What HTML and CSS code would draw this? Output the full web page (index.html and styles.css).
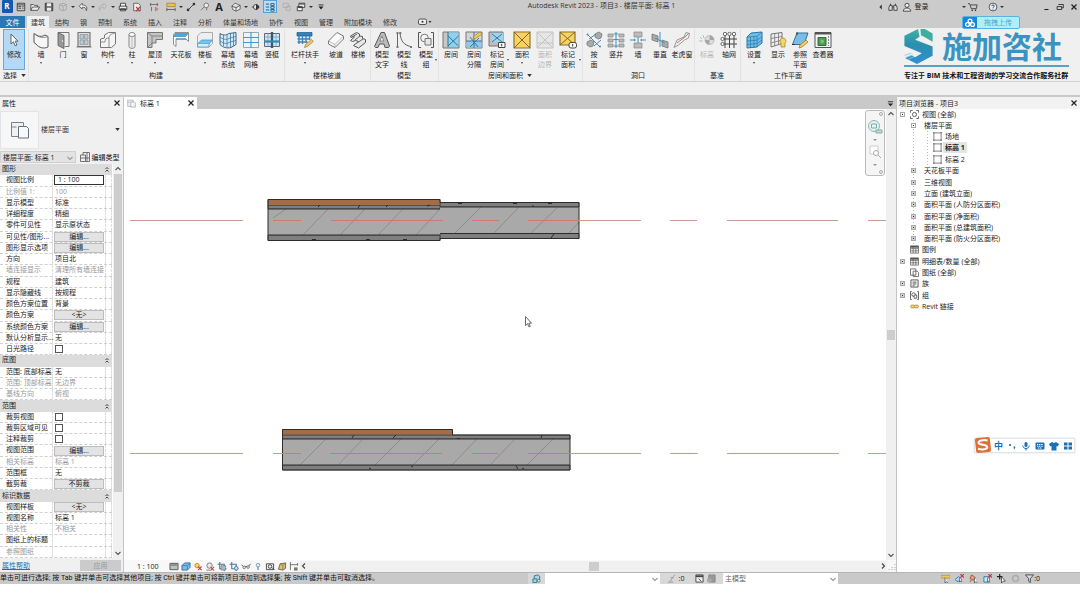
FILE: index.html
```html
<!DOCTYPE html>
<html lang="zh">
<head>
<meta charset="utf-8">
<title>Autodesk Revit 2023 - 项目3</title>
<link rel="stylesheet" href="styles.css">
</head>
<body>
<svg class="sprite" aria-hidden="true">
  <!-- ribbon icons -->
  <symbol id="cursor" viewBox="0 0 18 18"><path d="M6 3v10l2.400-2.200 1.800 4 1.800-.8-1.800-3.800H13z" fill="#fff" stroke="#555" stroke-width=".9"/></symbol>
  <symbol id="wall" viewBox="0 0 18 18"><path d="M2 2.500c4 3.500 8 3.500 11 1.500l3 1.500V16c-4 2-9 1-12-3l-2-1.500z" fill="#f6f6f6" stroke="#555"/><path d="M2 2.500 4.500 4c3 3 8 3 11.500 1.500" fill="none" stroke="#777" stroke-width=".8"/></symbol>
  <symbol id="door" viewBox="0 0 18 18"><path d="M4 1.500h11v14h-4" fill="#eee" stroke="#777"/><path d="M4 1.500l6 3v13l-6-3z" fill="#999" stroke="#555" stroke-width=".8"/><circle cx="8.500" cy="10" r=".7" fill="#fff"/></symbol>
  <symbol id="window" viewBox="0 0 18 18"><path d="M1.500 16h15M3 1.500h12v14H3z" fill="#ddd" stroke="#777" stroke-width="1.200"/><path d="M5 3.500h3.500v4.500H5zM9.500 3.500H13v4.500H9.500zM5 9h3.500v4.500H5zM9.500 9H13v4.500H9.500z" fill="#b9cad6" stroke="#888" stroke-width=".6"/></symbol>
  <symbol id="comp" viewBox="0 0 18 18"><path d="M1.500 8l4-1V4l4-2.500h7V13l-4 3.500h-11z" fill="#f4f4f4" stroke="#777"/><path d="M10 7c-3 0-4 1-4 4H1.500M10 7v9M10 7c0-3 2-4 6-5" fill="none" stroke="#777" stroke-width=".8"/></symbol>
  <symbol id="column" viewBox="0 0 18 18"><path d="M6 3.500v12c0 2.400 6 2.400 6 0v-12" fill="#eee" stroke="#888"/><ellipse cx="9" cy="3.500" rx="3" ry="2" fill="#fff" stroke="#888"/><path d="M9 6v10" stroke="#bbb"/></symbol>
  <symbol id="roof" viewBox="0 0 18 18"><path d="M1.500 1.500h15v7H10V12H6v4.500H1.500z" fill="#c4c4c4" stroke="#777"/><path d="M1.500 1.500l4.500 3.500h10.500M6 5v7l-4.500 4.500" fill="none" stroke="#777" stroke-width=".8"/></symbol>
  <symbol id="ceiling" viewBox="0 0 18 18"><path d="M3 1.500h13.500v9L14 8H4v7.500l-2.500-2V4z" fill="#fafafa" stroke="#777" stroke-width=".8"/><path d="M3.500 2.500H16L13.500 5.500H1.800z" fill="#45aae0" stroke="#2c7fae" stroke-width=".6"/><path d="M4 8h10" stroke="#2c8fc4"/></symbol>
  <symbol id="floor" viewBox="0 0 18 18"><path d="M5 1.500h11.500v11L13 16H1.500V5z" fill="#eee" stroke="#999" stroke-width=".8"/><path d="M1.500 13l4-4h11L13 13z" fill="#7cc3ea" stroke="#3d92c0" stroke-width=".7"/><path d="M1.500 13v3H13v-3" fill="#d7ecf7" stroke="#3d92c0" stroke-width=".7"/></symbol>
  <symbol id="cwsys" viewBox="0 0 18 18"><path d="M1 2.500c3 2 6 2 9 0l7-1v12l-5 3c-4 1-8 0-11-3z" fill="#d4e9f4" stroke="#44667c"/><path d="M1 6c4 3 7 3 10 1l6-1.500M1 10c4 3 7 3 10 1l6-1.500M4.500 3.500V15M8 3.500v13M11.500 2.500V17M14.500 2v13" fill="none" stroke="#3c7fa6" stroke-width=".8"/></symbol>
  <symbol id="cwgrid" viewBox="0 0 18 18"><path d="M1.500 1.500h15v15h-15z" fill="#eaf4fa" stroke="#9aa"/><path d="M9 1v16M1 6.500h16M1 11.500h16" stroke="#3a9ccf" stroke-width="1.100"/></symbol>
  <symbol id="mullion" viewBox="0 0 18 18"><path d="M1.500 2.500h15v13h-15z" fill="#cfe6f3" stroke="#667"/><path d="M5 2.500v13M13 2.500v13M1.500 6h15" stroke="#89a" stroke-width=".8"/><path d="M9 1v16" stroke="#37596d" stroke-width="2.400"/><path d="M1 10.500h16" stroke="#2f88ba" stroke-width="2.200"/></symbol>
  <symbol id="rail" viewBox="0 0 18 18"><path d="M1 1.500h15v3.500H1z" fill="#2d83c4" stroke="#24597d" stroke-width=".7"/><path d="M1.500 8h13M1.500 11h10M3 5v8M6.500 5v8M10 5v7M13.500 5v4" stroke="#3d87b8" stroke-width="1.400"/><path d="M8.500 16.500l1-3 6-5 1.800 2-6 5z" fill="#f3c765" stroke="#a77b29" stroke-width=".7"/></symbol>
  <symbol id="ramp" viewBox="0 0 18 18"><path d="M1.500 10l8.500-8.500 6.500 3.500v3L8 16.500 1.500 13z" fill="#fafafa" stroke="#777"/><path d="M1.500 10L8 13.500 16.500 5M8 13.500v3" fill="none" stroke="#999" stroke-width=".7"/></symbol>
  <symbol id="stair" viewBox="0 0 18 18"><path d="M1.500 5l6-3.500 3 1.500v2l3 .5v2l3 1v3l-7 5.500-5-2.500 5-4-3-1-3 1-2-1 4-3.500-1.500-.5-2 1z" fill="#e8e8e8" stroke="#555"/><path d="M3 6l5-3M6 9l5-4M8 12l6-4" stroke="#666"/></symbol>
  <symbol id="mtext" viewBox="0 0 18 18"><path d="M1.500 15.500L8 1.500h3.500l5 13.500-1 1.500h-3.500l-1-3.500H6.500L5 16.500H2.500z" fill="#bbb" stroke="#555"/><path d="M6.800 10L9 5l1.800 5z" fill="#f5f5f5" stroke="#666" stroke-width=".7"/></symbol>
  <symbol id="mline" viewBox="0 0 18 18"><path d="M2.500 2v14M5 2c1 9 4 12 12 14" fill="none" stroke="#555" stroke-width=".9"/><path d="M1.500 1h2v2h-2zM1.500 15h2v2h-2zM4.300 1h2v2h-2zM15 15h2v2h-2z" fill="#777"/></symbol>
  <symbol id="mgroup" viewBox="0 0 18 18"><path d="M4 1.500H1.500v15H4M14 1.500h2.500v15H14" fill="none" stroke="#555"/><circle cx="7.500" cy="7" r="3.800" fill="#f6f6f6" stroke="#777"/><path d="M8 7.500h6v6.500H8z" fill="#e6e6e6" stroke="#777"/></symbol>
  <symbol id="room" viewBox="0 0 18 18"><path d="M1 1h16v16H1z" fill="#c6c6c6" stroke="#777"/><path d="M6 1.500h10.500V16H6z" fill="#8fd0ef"/><path d="M6 5l10.500 10M16.500 5L6 15M6 1v15" stroke="#246b94" stroke-width=".9" fill="none"/></symbol>
  <symbol id="roomsep" viewBox="0 0 18 18"><path d="M1 1h16v16H1z" fill="#d4d4d4" stroke="#777"/><path d="M1.500 10h15v6.500h-15z" fill="#8fc9e8"/><path d="M5 6l8 10M14 7L5 16M1 10h16M9 1v16" stroke="#2b6f98" stroke-width=".9"/><path d="M8 8l1-3 6-4 2 2-6 4z" fill="#f1cf58" stroke="#927425" stroke-width=".6"/></symbol>
  <symbol id="roomtag" viewBox="0 0 18 18"><path d="M1 1h14v14H1z" fill="#bdbdbd" stroke="#777"/><path d="M4 2h11v9H4z" fill="#9fd3ee"/><path d="M4 3l10 8M14 3L4 11" stroke="#286e96" stroke-width=".9"/><path d="M10.500 11.500H17v5h-6.500z" fill="#fff" stroke="#444"/><path d="M13.700 12.800v2.500" stroke="#333"/></symbol>
  <symbol id="area" viewBox="0 0 18 18"><path d="M1 1h16v16H1z" fill="#f9d262" stroke="#8a7330" stroke-width="1.200"/><path d="M1 1l16 16M17 1L1 17" stroke="#6f5b23" stroke-width=".9"/></symbol>
  <symbol id="areab" viewBox="0 0 18 18"><path d="M1 1h16v16H1z" fill="#e6e6e6" stroke="#c2c2c2"/><path d="M1 1l16 16M17 1L1 17M1 12h16" stroke="#c4c4c4"/></symbol>
  <symbol id="areatag" viewBox="0 0 18 18"><path d="M1 1h15v13H1z" fill="#f9d262" stroke="#8a7330" stroke-width="1.200"/><path d="M1 1l15 13M16 1L1 14" stroke="#6f5b23" stroke-width=".9"/><rect x="10" y="11.500" width="7.500" height="5.500" rx="2" fill="#fff" stroke="#444"/><path d="M13.700 13v2.500" stroke="#333"/></symbol>
  <symbol id="byface" viewBox="0 0 18 18"><path d="M10 3l4-2 3 2-1 4-3 1-3-2zM2 11l4-2 3 2-1 4-3 1-3-2z" fill="#aaa" stroke="#777" stroke-width=".8"/><path d="M2 3l13 13M4 8l7-5M9 15l7-6" stroke="#4a8cb0"/><circle cx="2.500" cy="3.500" r="1" fill="#4a8cb0"/><circle cx="15" cy="15.500" r="1" fill="#4a8cb0"/></symbol>
  <symbol id="shaft" viewBox="0 0 18 18"><path d="M1 3h5v3H1zM12 3h5v3h-5zM1 8h5v3H1zM12 8h5v3h-5zM1 13h5v3H1zM12 13h5v3h-5z" fill="#bbb" stroke="#888" stroke-width=".7"/><path d="M9 1v16M6.500 3h5M6.500 8.500h5M6.500 15h5" stroke="#3e92bd"/></symbol>
  <symbol id="wallop" viewBox="0 0 18 18"><path d="M5 1h8v5H5zM5 12h8v5H5z" fill="#bbb" stroke="#888" stroke-width=".7"/><path d="M1 9h4M13 9h4M9 6v6" stroke="#3e92bd"/><path d="M5 7.500v3L7 9zM13 7.500v3L11 9z" fill="#3e92bd"/></symbol>
  <symbol id="vert" viewBox="0 0 18 18"><path d="M1 3l6 2v6L1 9zM11 9l6 2v6l-6-2z" fill="#aaa" stroke="#777" stroke-width=".8"/><path d="M9 1v15M4 7l10 5" stroke="#3e92bd"/></symbol>
  <symbol id="dormer" viewBox="0 0 18 18"><path d="M1 16.500L4 9l7-3 2-4.500 3.500 1-1 4.500-4 2-6 5z" fill="#f2f2f2" stroke="#999"/><path d="M4 12l8-6 4-4" fill="none" stroke="#a87d77"/></symbol>
  <symbol id="level" viewBox="0 0 18 18"><path d="M2 6l2 2M5 4l1 3M1 10h4" stroke="#bbb"/><circle cx="11.500" cy="9" r="4.500" fill="#ddd" stroke="#bbb"/><path d="M11.500 4.500V9H16a4.500 4.500 0 0 0-4.500-4.500M11.500 9v4.500A4.500 4.500 0 0 1 7 9z" fill="#a5a5a5"/></symbol>
  <symbol id="grid" viewBox="0 0 18 18"><path d="M5 5v12M9.500 5v12M14 5v12M4 8h13M4 13h13" stroke="#444"/><g fill="#fff" stroke="#444" stroke-width=".8"><circle cx="5" cy="3" r="1.700"/><circle cx="9.500" cy="3" r="1.700"/><circle cx="14" cy="3" r="1.700"/><circle cx="2.500" cy="8" r="1.600"/><circle cx="2.500" cy="13" r="1.600"/></g></symbol>
  <symbol id="wpset" viewBox="0 0 18 18"><path d="M2 6l4-4 11-1v11l-5 4-10 1z" fill="#6fbeea" stroke="#2b75a3"/><path d="M2 6l10-.7L17 1M12 5.500V16M5.500 6v11M9 5.500v11M2 10l10-.8 5-3.500M2 13.500l10-1 5-3.500" fill="none" stroke="#2b75a3" stroke-width=".7"/></symbol>
  <symbol id="wpshow" viewBox="0 0 18 18"><path d="M2 3l11-1.500v11L2 16z" fill="#eee" stroke="#777"/><path d="M5.700 2.500v12.500M9.500 2v12M2 7.500l11-2M2 12l11-3" stroke="#777" stroke-width=".8"/><path d="M14 7a3 3 0 0 0-2 5.200V16h4v-3.800A3 3 0 0 0 14 7z" fill="#f7d661" stroke="#9a8136" stroke-width=".7"/></symbol>
  <symbol id="refp" viewBox="0 0 18 18"><path d="M6 2h11l-4 11.500H1.500z" fill="#7dbce8" stroke="#356f99"/><path d="M6 1v3M1 13.500h3" stroke="#333"/><path d="M8 17l1-3 6-5 2 2-6 5z" fill="#f3cf62" stroke="#927425" stroke-width=".7"/></symbol>
  <symbol id="viewer" viewBox="0 0 18 18"><path d="M1 1.500h16v15H1z" fill="#f5f5f5" stroke="#555"/><path d="M1 2.500h16" stroke="#555" stroke-width="2"/><path d="M4 6.500h8v8H4z" fill="#4d9b51" stroke="#366f39"/><path d="M6.500 9c2-1 3.500 0 3.500 1.500s-1.500 2.500-3.500 1.500z" fill="#7dbf7b"/><path d="M14.500 5v10" stroke="#888" stroke-dasharray="2 1"/></symbol>
  <!-- quick access icons -->
  <symbol id="q-home" viewBox="0 0 12 12"><path d="M1.500 1.500h9v9h-9zM1.500 3.500h9M3 5.500h3M3 7.500h3M7.500 5.500H9M7.500 7.500H9" fill="none" stroke="#333"/></symbol>
  <symbol id="q-open" viewBox="0 0 12 12"><path d="M1 10V3h3l1 1h4v2M1 10l2-4h8.500L9 10z" fill="#eee" stroke="#444"/></symbol>
  <symbol id="q-save" viewBox="0 0 12 12"><path d="M1.500 1.500h9v9h-9z" fill="#666" stroke="#333"/><path d="M3.500 1.500h5V5h-5zM3.500 7h5v3.500h-5z" fill="#eee"/></symbol>
  <symbol id="q-cloud" viewBox="0 0 12 12"><path d="M2 3l4-1.500L10 3v6l-4 1.500L2 9zM2 3l4 2 4-2M6 5v5" fill="#ccc" stroke="#a2a2a2"/></symbol>
  <symbol id="q-undo" viewBox="0 0 12 12"><path d="M5 1.500L1.500 5 5 8.500V6.500c3-.5 5 .5 5 4 2-5-1-7-5-7z" fill="#eee" stroke="#444" stroke-width=".9"/></symbol>
  <symbol id="q-redo" viewBox="0 0 12 12"><path d="M7 1.500L10.500 5 7 8.500V6.500c-3-.5-5 .5-5 4-2-5 1-7 5-7z" fill="#ccc" stroke="#aaa" stroke-width=".9"/></symbol>
  <symbol id="q-print" viewBox="0 0 12 12"><path d="M3 5V1.500h6V5M1.500 5h9v4h-9zM3 8h6v2.500H3z" fill="#f0f0f0" stroke="#333"/></symbol>
  <symbol id="q-close" viewBox="0 0 12 12"><path d="M2 1.500h5.500L10 4v6.500H2z" fill="#eee" stroke="#555"/><path d="M5 6l4.500 5M9.500 6L5 11" stroke="#c33" stroke-width="1.400"/></symbol>
  <symbol id="q-measure" viewBox="0 0 12 12"><path d="M1 3h10M2 1v4M10 1v4M3 6v5M8 6v5" stroke="#666"/><path d="M8 7h3v3H8z" fill="#c88"/></symbol>
  <symbol id="q-dim" viewBox="0 0 12 12"><path d="M1 1.500h10v4H1z" fill="#f0c14f" stroke="#96762b" stroke-width=".8"/><path d="M1 9h10M1 7v4M11 7v4" stroke="#555"/></symbol>
  <symbol id="q-line" viewBox="0 0 12 12"><path d="M2 10l8-8" stroke="#333"/><circle cx="2.500" cy="9.500" r="1.600" fill="#333"/><circle cx="9.500" cy="2.500" r="1.600" fill="#333"/></symbol>
  <symbol id="q-tag" viewBox="0 0 12 12"><path d="M1 10l4-4M8 5v5" stroke="#666"/><circle cx="7.500" cy="4" r="2.800" fill="#eee" stroke="#666"/></symbol>
  <symbol id="q-3d" viewBox="0 0 12 12"><path d="M1 5l4-3.500L11 4v4.500L6 11 2 9zM1 5l5 2 5-3M6 7v4" fill="#eee" stroke="#444" stroke-width=".9"/></symbol>
  <symbol id="q-sect" viewBox="0 0 12 12"><path d="M1 6h3" stroke="#333"/><circle cx="6" cy="6" r="3" fill="#eee" stroke="#333"/><path d="M6 2l4.500 4L6 10z" fill="#333"/></symbol>
  <symbol id="q-thin" viewBox="0 0 12 12"><path d="M1 2.500h4M1 6h4M1 9.500h4M7 2h4v2H7zM7 5.500h4v2H7zM7 9h4v2H7z" fill="#fff" stroke="#24648f" stroke-width="1.200"/></symbol>
  <symbol id="q-hid" viewBox="0 0 12 12"><path d="M1.500 1.500h6v5h-6zM5 5h5v5H5z" fill="#ccc" stroke="#aaa"/></symbol>
  <symbol id="q-win" viewBox="0 0 12 12"><path d="M3.500 1.500h7v5h-7zM1.500 5.500h6v5h-6z" fill="#eee" stroke="#333"/><path d="M4 2.500h6M2 6.500h5" stroke="#333"/></symbol>
  <symbol id="dn" viewBox="0 0 6 4"><path d="M0 0h6L3 4z" fill="#333"/></symbol>
  <symbol id="chev" viewBox="0 0 8 8"><path d="M1.500 3L4 5.500 6.500 3" fill="none" stroke="currentColor" stroke-width="1.100"/></symbol>
  <symbol id="x" viewBox="0 0 8 8"><path d="M1.500 1.500l5 5M6.500 1.500l-5 5" stroke="#222" stroke-width="1.200"/></symbol>
  <symbol id="dbl" viewBox="0 0 8 8"><path d="M2.500 4L4 2.500 5.500 4M2.500 6.500L4 5l1.500 1.500" fill="none" stroke="#333" stroke-width=".9"/></symbol>
  <symbol id="plan" viewBox="0 0 20 20"><path d="M1.500 2.500h12v14h-12zM1.500 7h5" fill="#eef2f5" stroke="#78838d"/><path d="M8.500 6.500h8l2 2v9.500h-10z" fill="#f6f9fb" stroke="#66717b"/></symbol>
  <symbol id="sheet" viewBox="0 0 10 10"><path d="M1 1h8v8H1z" fill="#fff" stroke="#666" stroke-width=".9"/><path d="M0 1h1M0 9h1M9 1h1M9 9h1M1 0v1M9 0v1M1 9v1M9 9v1" stroke="#666"/></symbol>
  <symbol id="t-view" viewBox="0 0 10 10"><path d="M3 .5H.5V3M7 .5h2.500V3M3 9.500H.5V7M7 9.500h2.500V7" fill="none" stroke="#555"/><circle cx="5" cy="5" r="2.300" fill="none" stroke="#555"/></symbol>
  <symbol id="t-table" viewBox="0 0 10 10"><path d="M.5 1h9v8h-9zM.5 4h9M.5 6.500h9M3.500 1v8M6.500 4v5" fill="#fff" stroke="#555" stroke-width=".8"/><path d="M.5 2h9" stroke="#555" stroke-width="2"/></symbol>
  <symbol id="t-sheet" viewBox="0 0 10 10"><path d="M.5 1h6v7h-6zM3.500 3.500H8L9.500 5v4.500h-6z" fill="#fff" stroke="#555" stroke-width=".9"/></symbol>
  <symbol id="t-fam" viewBox="0 0 10 10"><path d="M1 1h8v8H1z" fill="#eee" stroke="#555"/><path d="M3 3.500h4M3 5.500h4M3 7.500h2" stroke="#555"/></symbol>
  <symbol id="t-grp" viewBox="0 0 10 10"><path d="M2 .5H.5v9H2M8 .5h1.500v9H8" fill="none" stroke="#555"/><circle cx="4" cy="4" r="2" fill="none" stroke="#555"/><path d="M4.500 4.500h3v3.500h-3z" fill="#fff" stroke="#555"/></symbol>
  <symbol id="t-link" viewBox="0 0 10 10"><rect x=".7" y="3.500" width="4.600" height="3" rx="1.500" fill="#f4d98c" stroke="#b88a1e"/><rect x="4.700" y="3.500" width="4.600" height="3" rx="1.500" fill="#f4d98c" stroke="#b88a1e"/></symbol>
  <!-- view bar and status icons -->
  <symbol id="v-detail" viewBox="0 0 10 10"><path d="M.5 1.500h9v7h-9z" fill="#b9c4bd" stroke="#555"/><path d="M1 3.500h8M3 2v2M5 2v2M7 2v2" stroke="#555" stroke-width=".6"/></symbol>
  <symbol id="v-style" viewBox="0 0 10 10"><path d="M.5 4l3-3h6v5l-3 3h-6z" fill="#7fb9e6" stroke="#2e6ea3"/><path d="M.5 4h6l3-3M6.500 4v5" fill="none" stroke="#2e6ea3" stroke-width=".7"/></symbol>
  <symbol id="v-sun" viewBox="0 0 10 10"><circle cx="4" cy="4" r="2.500" fill="#f7d063" stroke="#c3912a"/><path d="M5 5l4 4M9 5L5 9" stroke="#c04848" stroke-width="1.300"/></symbol>
  <symbol id="v-shadow" viewBox="0 0 10 10"><circle cx="4.500" cy="4" r="3" fill="#e8e8e8" stroke="#777"/><path d="M1 9h4" stroke="#777"/><path d="M5.500 5.500l4 4M9.500 5.500l-4 4" stroke="#c04848" stroke-width="1.200"/></symbol>
  <symbol id="v-crop" viewBox="0 0 10 10"><path d="M2.500 0v7.500H10M0 2.500h7.500V10" fill="none" stroke="#46799b" stroke-width="1.200"/><path d="M4 4h5v5H4z" fill="#a0bdd2" stroke="#8b5959" stroke-width=".6"/></symbol>
  <symbol id="v-cropshow" viewBox="0 0 10 10"><path d="M2.500 0v7.500H10M0 2.500h7.500V10" fill="none" stroke="#46799b" stroke-width="1.200"/><circle cx="7.500" cy="7" r="2" fill="#cfe3f0" stroke="#46799b"/></symbol>
  <symbol id="v-glass" viewBox="0 0 10 10"><path d="M0 3l3 3 2-1.500L7 6l3-4" fill="none" stroke="#555"/><circle cx="3" cy="6" r="1.500" fill="#ddd" stroke="#555" stroke-width=".7"/><circle cx="7.300" cy="5.600" r="1.500" fill="#ddd" stroke="#555" stroke-width=".7"/></symbol>
  <symbol id="v-bulb" viewBox="0 0 10 10"><circle cx="5" cy="3.500" r="2" fill="#e0f0fa" stroke="#568bac" stroke-width=".8"/><path d="M5 5.500v3.500" stroke="#568bac" stroke-width="1.300"/></symbol>
  <symbol id="v-temp" viewBox="0 0 10 10"><path d="M1 2h8v6.500H1z" fill="#eee" stroke="#444"/><circle cx="5" cy="5" r="2" fill="none" stroke="#444"/><path d="M7 6l3 3" stroke="#333"/></symbol>
  <symbol id="v-anal" viewBox="0 0 10 10"><path d="M1 8l2-6 6-1v6l-3 2z" fill="#d9c17c" stroke="#755f3c"/><path d="M3 2l3 2v5M6 4l3-3" fill="none" stroke="#755f3c" stroke-width=".7"/></symbol>
  <symbol id="v-cons" viewBox="0 0 10 10"><path d="M1 0v9M1 3h8M9 1v3" stroke="#666"/><path d="M5 6h4v3.500H5z" fill="#777"/></symbol>
  <symbol id="s-ws" viewBox="0 0 10 10"><path d="M1 5.500h4.500v4H1zM2.500 5.500V2l4-1 2 1.500v4" fill="#a7d4e6" stroke="#287992"/><circle cx="7.500" cy="7.500" r="1.500" fill="#eee" stroke="#444" stroke-width=".7"/></symbol>
  <symbol id="s-edit" viewBox="0 0 10 10"><path d="M3 9L7 3l2-2M1 9h6M4 4h3" fill="none" stroke="#999"/></symbol>
  <symbol id="s-opt" viewBox="0 0 10 10"><path d="M1 1h8v8H1z" fill="#eee" stroke="#444"/><path d="M1 2.500h8" stroke="#444" stroke-width="2"/><path d="M4 5l3 3" stroke="#444"/></symbol>
  <symbol id="s-opt2" viewBox="0 0 10 10"><path d="M2 1h7v8H2z" fill="#999" stroke="#888"/><path d="M0 5h5v4H0z" fill="#aaa"/></symbol>
  <symbol id="s-link" viewBox="0 0 10 10"><path d="M0 1.500h10v3H0z" fill="#ecc85e" stroke="#a88b34" stroke-width=".7"/><path d="M4.500 4v6l1.700-1.500L8 10" fill="#fff" stroke="#444" stroke-width=".8"/></symbol>
  <symbol id="s-und" viewBox="0 0 10 10"><path d="M0 6l4-3 3 2v3H2z" fill="#b8d8ef" stroke="#3c77a4"/><path d="M6 0l4 4M10 0L6 4" stroke="#c93535" stroke-width="1.200"/><path d="M5 4v5l1.500-1.500L8 9" fill="#fff" stroke="#444" stroke-width=".7"/></symbol>
  <symbol id="s-pin" viewBox="0 0 10 10"><path d="M3 1l4 3-2 3-4-2zM1 9l2-3" fill="#e8a082" stroke="#a65338"/><path d="M6 4v6l1.500-1.500L9.500 10" fill="#fff" stroke="#444" stroke-width=".8"/></symbol>
  <symbol id="s-face" viewBox="0 0 10 10"><path d="M1 3h6v6H1z" fill="#cfe5f3" stroke="#32779f"/><path d="M6 0l4 4M10 0L6 4" stroke="#c93535" stroke-width="1.200"/><path d="M5 4v5l1.500-1.500L8 9" fill="#fff" stroke="#444" stroke-width=".7"/></symbol>
  <symbol id="s-drag" viewBox="0 0 10 10"><path d="M3 0v6M0 3h6" stroke="#222" stroke-width="1.300"/><path d="M5 3v7l1.700-2h2.600z" fill="#fff" stroke="#333" stroke-width=".8"/></symbol>
  <symbol id="s-ring" viewBox="0 0 10 10"><circle cx="5" cy="5" r="3.300" fill="none" stroke="#aaa" stroke-width="1.500"/></symbol>
  <symbol id="s-filter" viewBox="0 0 10 10"><path d="M.5 1h9L6 5v4.500L4 8V5z" fill="#ddd" stroke="#444"/></symbol>
</svg>

<div class="app">
  <header class="titlebar">
    <nav class="qat" aria-label="快速访问工具栏">
      <button class="rlogo" aria-label="Revit"><b>R</b></button>
      <button aria-label="主页"><svg><use href="#q-home"/></svg></button>
      <button aria-label="打开"><svg><use href="#q-open"/></svg></button>
      <button aria-label="保存"><svg><use href="#q-save"/></svg></button>
      <button aria-label="同步"><svg><use href="#q-cloud"/></svg></button>
      <i class="caret"></i>
      <button aria-label="放弃"><svg><use href="#q-undo"/></svg></button>
      <i class="caret"></i>
      <button aria-label="重做"><svg><use href="#q-redo"/></svg></button>
      <i class="caret"></i>
      <button aria-label="打印"><svg><use href="#q-print"/></svg></button>
      <button aria-label="关闭文件"><svg><use href="#q-close"/></svg></button>
      <i class="sep"></i>
      <button aria-label="测量"><svg><use href="#q-measure"/></svg></button>
      <i class="sep"></i>
      <button aria-label="对齐尺寸标注"><svg><use href="#q-dim"/></svg></button>
      <i class="caret"></i>
      <button aria-label="直线"><svg><use href="#q-line"/></svg></button>
      <button aria-label="按类别标记"><svg><use href="#q-tag"/></svg></button>
      <button class="bigA" aria-label="文字">A</button>
      <i class="sep"></i>
      <button aria-label="三维视图"><svg><use href="#q-3d"/></svg></button>
      <i class="caret"></i>
      <button aria-label="剖面"><svg><use href="#q-sect"/></svg></button>
      <button class="on" aria-label="细线"><svg><use href="#q-thin"/></svg></button>
      <i class="sep"></i>
      <button aria-label="关闭非活动视图"><svg><use href="#q-hid"/></svg></button>
      <button aria-label="切换窗口"><svg><use href="#q-win"/></svg></button>
      <i class="caret"></i>
      <button aria-label="自定义"><svg viewBox="0 0 12 12"><path d="M3 3.500h6" stroke="#222"/><path d="M3 5.500h6L6 9z" fill="#222"/></svg></button>
    </nav>
    <h1>Autodesk Revit 2023 - 项目3 - 楼层平面: 标高 1</h1>
    <div class="account">
      <button aria-label="收起"><svg viewBox="0 0 12 12"><path d="M7 3v6L4 6z" fill="#333"/></svg></button>
      <button aria-label="搜索"><svg viewBox="0 0 12 12"><path d="M2 4h3v6H1V7zM7 4h3l1 3v3H7zM5 6h2M3 2v2M9 2v2" fill="#ddd" stroke="#333"/></svg></button>
      <button class="login"><svg viewBox="0 0 12 12"><circle cx="6" cy="4" r="2.500" fill="#eee" stroke="#333"/><path d="M1.500 11c0-5 9-5 9 0z" fill="#eee" stroke="#333"/></svg>登录</button>
      <i class="caret push"></i>
      <button aria-label="购物车"><svg viewBox="0 0 12 12"><path d="M0 2h2l2 6h6l1-4.500H3" fill="none" stroke="#333"/><circle cx="5" cy="10" r="1" fill="#333"/><circle cx="9" cy="10" r="1" fill="#333"/></svg></button>
      <button class="help" aria-label="帮助"><svg viewBox="0 0 12 12"><circle cx="6" cy="6" r="4.700" fill="#eee" stroke="#345"/><path d="M4.500 5c0-2 3-2 3 0 0 1-1.500 1-1.500 2M6 8v1" fill="none" stroke="#234"/></svg></button>
      <i class="caret"></i>
      <span class="wins">
        <button aria-label="最小化"><svg viewBox="0 0 12 12"><path d="M4 9h5" stroke="#222" stroke-width="1.300"/></svg></button>
        <button aria-label="还原"><svg viewBox="0 0 12 12"><path d="M4 3h6v4H8M2.500 5.500H8v3.500H2.500z" fill="none" stroke="#222"/></svg></button>
        <button aria-label="关闭"><svg viewBox="0 0 12 12"><path d="M3 3l6 6M9 3l-6 6" stroke="#222" stroke-width="1.500"/></svg></button>
      </span>
    </div>
  </header>

  <nav class="tabs">
    <button class="file">文件</button>
    <button class="active">建筑</button>
    <button>结构</button><button>钢</button><button>预制</button><button>系统</button><button>插入</button><button>注释</button><button>分析</button><button>体量和场地</button><button>协作</button><button>视图</button><button>管理</button><button>附加模块</button><button>修改</button>
    <button class="more" aria-label="显示"><svg viewBox="0 0 14 8"><rect x=".5" y="1" width="8" height="5.500" rx="1.500" fill="#eee" stroke="#555"/><circle cx="4.500" cy="3.700" r="1" fill="#333"/><path d="M10.500 3h3L12 5z" fill="#333"/></svg></button>
    <button class="upload"><svg viewBox="0 0 14 12"><path d="M0 0h14v12H0z" fill="#1787dc"/><g fill="none" stroke="#fff" stroke-width="1.300"><circle cx="7" cy="4" r="1.900"/><circle cx="4.500" cy="7.500" r="1.900"/><circle cx="9.500" cy="7.500" r="1.900"/></g></svg><span>拖拽上传</span></button>
  </nav>

  <section class="ribbon">
    <div class="panel sel">
      <div class="tools"><button class="tool w22 active"><svg><use href="#cursor"/></svg>修改</button></div>
      <p>选择<svg class="dn"><use href="#dn"/></svg></p>
    </div>
    <div class="panel">
      <div class="tools">
        <button class="tool w24 dd"><svg><use href="#wall"/></svg>墙</button>
        <button class="tool w20"><svg><use href="#door"/></svg>门</button>
        <button class="tool w22"><svg><use href="#window"/></svg>窗</button>
        <button class="tool w26 dd"><svg><use href="#comp"/></svg>构件</button>
        <button class="tool w22 dd"><svg><use href="#column"/></svg>柱</button>
        <button class="tool w24 dd"><svg><use href="#roof"/></svg>屋顶</button>
        <button class="tool w28"><svg><use href="#ceiling"/></svg>天花板</button>
        <button class="tool w20 dd"><svg><use href="#floor"/></svg>楼板</button>
        <button class="tool w26"><svg><use href="#cwsys"/></svg>幕墙<br>系统</button>
        <button class="tool w20"><svg><use href="#cwgrid"/></svg>幕墙<br>网格</button>
        <button class="tool w22"><svg><use href="#mullion"/></svg>竖梃</button>
      </div>
      <p>构建</p>
    </div>
    <div class="panel">
      <div class="tools">
        <button class="tool w40 dd"><svg><use href="#rail"/></svg>栏杆扶手</button>
        <button class="tool w22"><svg><use href="#ramp"/></svg>坡道</button>
        <button class="tool w22"><svg><use href="#stair"/></svg>楼梯</button>
      </div>
      <p>楼梯坡道</p>
    </div>
    <div class="panel">
      <div class="tools">
        <button class="tool w22"><svg><use href="#mtext"/></svg>模型<br>文字</button>
        <button class="tool w22"><svg><use href="#mline"/></svg>模型<br>线</button>
        <button class="tool w22 ds"><svg><use href="#mgroup"/></svg>模型<br>组</button>
      </div>
      <p>模型</p>
    </div>
    <div class="panel">
      <div class="tools">
        <button class="tool w24"><svg><use href="#room"/></svg>房间</button>
        <button class="tool w22"><svg><use href="#roomsep"/></svg>房间<br>分隔</button>
        <button class="tool w24 ds"><svg><use href="#roomtag"/></svg>标记<br>房间</button>
        <button class="tool w26 dd"><svg><use href="#area"/></svg>面积</button>
        <button class="tool w20 off" disabled><svg><use href="#areab"/></svg>面积<br>边界</button>
        <button class="tool w26 ds"><svg><use href="#areatag"/></svg>标记<br>面积</button>
      </div>
      <p>房间和面积<svg class="dn"><use href="#dn"/></svg></p>
    </div>
    <div class="panel">
      <div class="tools">
        <button class="tool w22"><svg><use href="#byface"/></svg>按<br>面</button>
        <button class="tool w22"><svg><use href="#shaft"/></svg>竖井</button>
        <button class="tool w22"><svg><use href="#wallop"/></svg>墙</button>
        <button class="tool w22"><svg><use href="#vert"/></svg>垂直</button>
        <button class="tool w22"><svg><use href="#dormer"/></svg>老虎窗</button>
      </div>
      <p>洞口</p>
    </div>
    <div class="panel">
      <div class="tools">
        <button class="tool w24 off" disabled><svg><use href="#level"/></svg>标高</button>
        <button class="tool w20"><svg><use href="#grid"/></svg>轴网</button>
      </div>
      <p>基准</p>
    </div>
    <div class="panel last">
      <div class="tools">
        <button class="tool w26 dd"><svg><use href="#wpset"/></svg>设置</button>
        <button class="tool w22"><svg><use href="#wpshow"/></svg>显示</button>
        <button class="tool w22"><svg><use href="#refp"/></svg>参照<br>平面</button>
        <button class="tool w24"><svg><use href="#viewer"/></svg>查看器</button>
      </div>
      <p>工作平面</p>
    </div>
    <aside class="brand">
      <div class="brandrow">
        <svg viewBox="0 0 30 36">
          <defs><linearGradient id="sg" x1="0" y1="0" x2="0" y2="1"><stop offset="0" stop-color="#3fb0a4"/><stop offset=".45" stop-color="#2a8fae"/><stop offset="1" stop-color="#2f8fd6"/></linearGradient></defs>
          <path d="M14 0L0 7v10.500L18 25l-7 4-4-2-6 3 12 6 16-8.500V18L11 11l4.500-3z" fill="url(#sg)"/>
          <path d="M16.500 0H21l8 4.500V13l-8-4.500-4-2z" fill="#3fae9f"/>
          <path d="M0 27l7-2M1 29.500l8-3M3 31.500l7-3" stroke="#8cc9dc" stroke-width=".9"/>
        </svg>
        <strong>施加咨社</strong>
      </div>
      <small>专注于 BIM 技术和工程咨询的学习交流合作服务社群</small>
    </aside>
  </section>
  <div class="options"></div>

  <main class="work">
    <aside class="props">
      <header class="phead"><h2>属性</h2><button aria-label="关闭属性"><svg><use href="#x"/></svg></button></header>
      <button class="ptype"><span class="thumb"><svg><use href="#plan"/></svg></span><span>楼层平面</span><svg class="dn"><use href="#dn"/></svg></button>
      <div class="pfilter">
        <span class="selwrap"><select aria-label="实例"><option>楼层平面: 标高 1</option></select><svg><use href="#chev"/></svg></span>
        <button><svg viewBox="0 0 10 10"><path d="M.5 3h5v6.500h-5zM3 3V.5h6.500v9h-4M.5 6h9M7 .5v9" fill="#eee" stroke="#555" stroke-width=".8"/></svg>编辑类型</button>
      </div>
      <div class="pbody">
        <table>
          <tbody>
            <tr class="grp"><th colspan="3">图形<svg><use href="#dbl"/></svg></th></tr>
            <tr><th><label for="scale">视图比例</label></th><td><input id="scale" type="text" value="1 : 100"></td><td></td></tr>
            <tr class="ro"><th>比例值 1:</th><td>100</td><td></td></tr>
            <tr><th>显示模型</th><td>标准</td><td></td></tr>
            <tr><th>详细程度</th><td>精细</td><td></td></tr>
            <tr><th>零件可见性</th><td>显示原状态</td><td></td></tr>
            <tr><th>可见性/图形...</th><td><button>编辑...</button></td><td></td></tr>
            <tr><th>图形显示选项</th><td><button>编辑...</button></td><td></td></tr>
            <tr><th>方向</th><td>项目北</td><td></td></tr>
            <tr class="ro"><th>墙连接显示</th><td>清理所有墙连接</td><td></td></tr>
            <tr><th>规程</th><td>建筑</td><td></td></tr>
            <tr><th>显示隐藏线</th><td>按规程</td><td></td></tr>
            <tr><th>颜色方案位置</th><td>背景</td><td></td></tr>
            <tr><th>颜色方案</th><td><button>&lt;无&gt;</button></td><td></td></tr>
            <tr><th>系统颜色方案</th><td><button>编辑...</button></td><td></td></tr>
            <tr><th>默认分析显示...</th><td>无</td><td></td></tr>
            <tr><th><label for="sun">日光路径</label></th><td><input id="sun" type="checkbox"></td><td></td></tr>
            <tr class="grp"><th colspan="3">底图<svg><use href="#dbl"/></svg></th></tr>
            <tr><th>范围: 底部标高</th><td>无</td><td></td></tr>
            <tr class="ro"><th>范围: 顶部标高</th><td>无边界</td><td></td></tr>
            <tr class="ro"><th>基线方向</th><td>俯视</td><td></td></tr>
            <tr class="grp"><th colspan="3">范围<svg><use href="#dbl"/></svg></th></tr>
            <tr><th><label for="crop">裁剪视图</label></th><td><input id="crop" type="checkbox"></td><td></td></tr>
            <tr><th><label for="cropv">裁剪区域可见</label></th><td><input id="cropv" type="checkbox"></td><td></td></tr>
            <tr><th><label for="anno">注释裁剪</label></th><td><input id="anno" type="checkbox"></td><td></td></tr>
            <tr><th>视图范围</th><td><button>编辑...</button></td><td></td></tr>
            <tr class="ro"><th>相关标高</th><td>标高 1</td><td></td></tr>
            <tr><th>范围框</th><td>无</td><td></td></tr>
            <tr><th>截剪裁</th><td><button>不剪裁</button></td><td></td></tr>
            <tr class="grp"><th colspan="3">标识数据<svg><use href="#dbl"/></svg></th></tr>
            <tr><th>视图样板</th><td><button>&lt;无&gt;</button></td><td></td></tr>
            <tr><th>视图名称</th><td>标高 1</td><td></td></tr>
            <tr class="ro"><th>相关性</th><td>不相关</td><td></td></tr>
            <tr><th>图纸上的标题</th><td></td><td></td></tr>
            <tr class="ro"><th>参照图纸</th><td></td><td></td></tr>
          </tbody>
        </table>
        <div class="vscroll">
          <svg class="up"><use href="#chev"/></svg><i class="thumbbar"></i><svg><use href="#chev"/></svg>
        </div>
      </div>
      <footer class="pfoot"><a href="#help">属性帮助</a><button disabled>应用</button></footer>
    </aside>

    <section class="doc">
      <div class="doctabs">
        <div class="doctab"><svg class="ic"><use href="#plan"/></svg><span>标高 1</span><button aria-label="关闭视图"><svg><use href="#x"/></svg></button></div>
        <svg class="tablist" viewBox="0 0 8 8"><path d="M1 2h6" stroke="#222"/><path d="M1 4h6L4 7z" fill="#222"/></svg>
      </div>
      <div class="view">
        <div class="canvas">
          <svg class="drawing" viewBox="124 109 762 451" preserveAspectRatio="xMinYMin meet">
            <g stroke="#4a4a4a" stroke-width=".8">
              <path d="M268 205h172v4H268zM268 235h172v5.500H268zM440 202.500h139v4.500H440zM440 233.500h139v5H440z" fill="#7f7f7f"/>
              <path d="M268 209h172v26H268zM440 207h139v26.500H440z" fill="#a9a9a9" stroke="none"/>
              <path d="M268 199.500h172v6H268z" fill="#a46d49"/>
              <path d="M282.500 435h287.500v4H282.500zM282.500 465h287.500v5H282.500z" fill="#7f7f7f"/>
              <path d="M282.500 439h287.500v26H282.500z" fill="#a9a9a9" stroke="none"/>
              <path d="M282.500 429.500h170v5.500H282.500z" fill="#a46d49"/>
            </g>
            <path d="M273 218l13-9M303 235l25-26M340 235l25-26M378 235l25-26M416 235l24-26M455 233l26-26M494 233l25-26M531 233l27-26M569 233l10-11M300 465l26-26M338 465l25-26M375 465l26-26M413 465l26-26M452 465l25-26M490 465l25-26M527 465l26-26" stroke="#858585" stroke-width=".8" fill="none"/>
            <path d="M318 207l2-2M358 208l2-3M386 207l2-2M427 206l3-1M312 239.500h4M366 239.500h4M403 239.500h4M458 203.500h4M513 203.500h4M532 206h2M548 203.500h4M551 238l3-4M352 438l2-3M393 438l3-3M457 438.500h3M541 438l1-3M369 468l2 1M411 466l2 1M516 466l2 3M522 468l2 1" stroke="#222" stroke-width=".9" fill="none"/>
            <g stroke="#2c2c2c" stroke-width="1" fill="none">
              <path d="M268 209h172M268 235h172M440 207h139M440 233.500h139M282.500 439h287.500M282.500 465h287.500"/>
              <path d="M268 199.500h172v3h139v36H440v2H268zM282.500 429.500h170v5.500H570v35H282.500z"/>
            </g>
            <path d="M130 220.500h113M579 220.500h62M670 220.500h27M727 220.500h111M868 220.500h18M130 453.500h113M273 453.500h10M570 453.500h71M670 453.500h28M727 453.500h112M868 453.500h18" stroke="#c99a8e"/>
            <path d="M273 220.500h28M331 220.500h112M472 220.500h27M528 220.500h51M283 453.500h18M330 453.500h112M472 453.500h26M528 453.500h42" stroke="#cf7770"/>
            <path d="M525.500 316.500v9l2-1.800 1.500 3.300 1.300-.6-1.500-3.200h2.700z" fill="#fff" stroke="#444" stroke-width=".8"/>
          </svg>
          <div class="navbar">
            <i></i>
            <button aria-label="控制盘"><svg viewBox="0 0 16 16"><circle cx="7" cy="7" r="5.500" fill="#e6f3ef" stroke="#8db8b0"/><path d="M4.500 5h5v4h-5z" fill="none" stroke="#7fa9b8"/><path d="M9 11h6v3H9z" fill="#c4dbd4" stroke="#8aa"/></svg></button>
            <i class="caret"></i>
            <button aria-label="缩放"><svg viewBox="0 0 16 16"><path d="M3 2h8v8H3z" fill="#fff" stroke="#ccc"/><circle cx="9" cy="9" r="2.500" fill="#fff" stroke="#aaa"/><path d="M11 11l3 3" stroke="#aaa"/></svg></button>
            <i class="caret"></i>
            <i></i>
          </div>
        </div>
        <div class="vscroll">
          <svg class="up"><use href="#chev"/></svg><i class="thumbbar small"></i><svg><use href="#chev"/></svg>
        </div>
      </div>
      <div class="viewbar">
        <span class="ratio">1 : 100</span>
        <button aria-label="详细程度"><svg><use href="#v-detail"/></svg></button>
        <button aria-label="视觉样式"><svg><use href="#v-style"/></svg></button>
        <button aria-label="日光路径"><svg><use href="#v-sun"/></svg></button>
        <button aria-label="阴影"><svg><use href="#v-shadow"/></svg></button>
        <button aria-label="裁剪视图"><svg><use href="#v-crop"/></svg></button>
        <button aria-label="显示裁剪区域"><svg><use href="#v-cropshow"/></svg></button>
        <button aria-label="临时隐藏"><svg><use href="#v-glass"/></svg></button>
        <button aria-label="显示隐藏的图元"><svg><use href="#v-bulb"/></svg></button>
        <button aria-label="临时视图属性"><svg><use href="#v-temp"/></svg></button>
        <button aria-label="分析模型"><svg><use href="#v-anal"/></svg></button>
        <button aria-label="显示约束"><svg><use href="#v-cons"/></svg></button>
        <div class="hscroll"><svg class="left"><use href="#chev"/></svg><i class="thumbbar"></i><svg class="right"><use href="#chev"/></svg></div>
        <svg class="grip" viewBox="0 0 9 10"><path d="M8 3v1M8 6v1M5 6v1M8 8v1M5 8v1M2 8v1" stroke="#aaa"/></svg>
      </div>
    </section>

    <aside class="browser">
      <header class="phead"><h2>项目浏览器 - 项目3</h2><button aria-label="关闭项目浏览器"><svg><use href="#x"/></svg></button></header>
      <ul class="tree">
        <li><div><i class="ex"></i><svg><use href="#t-view"/></svg>视图 (全部)</div>
          <ul>
            <li><div><i class="ex"></i>楼层平面</div>
              <ul>
                <li><div><svg><use href="#sheet"/></svg>场地</div></li>
                <li><div><svg><use href="#sheet"/></svg><b>标高 1</b></div></li>
                <li><div><svg><use href="#sheet"/></svg>标高 2</div></li>
              </ul>
            </li>
            <li><div><i class="ex plus"></i>天花板平面</div></li>
            <li><div><i class="ex plus"></i>三维视图</div></li>
            <li><div><i class="ex plus"></i>立面 (建筑立面)</div></li>
            <li><div><i class="ex plus"></i>面积平面 (人防分区面积)</div></li>
            <li><div><i class="ex plus"></i>面积平面 (净面积)</div></li>
            <li><div><i class="ex plus"></i>面积平面 (总建筑面积)</div></li>
            <li><div><i class="ex plus"></i>面积平面 (防火分区面积)</div></li>
          </ul>
        </li>
        <li><div><i class="ex none"></i><svg><use href="#t-table"/></svg>图例</div></li>
        <li><div><i class="ex plus"></i><svg><use href="#t-table"/></svg>明细表/数量 (全部)</div></li>
        <li><div><i class="ex none"></i><svg><use href="#t-sheet"/></svg>图纸 (全部)</div></li>
        <li><div><i class="ex plus"></i><svg><use href="#t-fam"/></svg>族</div></li>
        <li><div><i class="ex plus"></i><svg><use href="#t-grp"/></svg>组</div></li>
        <li><div><i class="ex none"></i><svg><use href="#t-link"/></svg>Revit 链接</div></li>
      </ul>
      <div class="ime">
        <svg class="sogou" viewBox="0 0 18 18"><rect x="1.500" y="1.500" width="15" height="15" rx="2" transform="rotate(-6 9 9)" fill="#e0703a"/><path d="M13.500 4.500C9 3.500 4.500 4.500 4.500 6.800s8.800 1.700 8.800 4.200-5 3-9.300 1.800" fill="none" stroke="#fff" stroke-width="2"/></svg>
        <b>中</b>
        <svg viewBox="0 0 10 10"><circle cx="3" cy="4" r="1.100" fill="#1b6fb3"/><path d="M6.500 5.500h1.700v1.500L7 8.500" fill="#1b6fb3"/></svg>
        <svg viewBox="0 0 10 10"><rect x="3.500" y="1" width="3" height="5" rx="1.500" fill="#1b6fb3"/><path d="M1.800 4.500c0 4 6.400 4 6.400 0M5 7.500v2" fill="none" stroke="#1b6fb3"/></svg>
        <svg viewBox="0 0 10 10"><rect x=".5" y="1.500" width="9" height="7" rx="1" fill="#1b6fb3"/><path d="M2 3.500h6M2 5.200h6M3 7h4" stroke="#fff" stroke-dasharray="1.200 .6"/></svg>
        <svg viewBox="0 0 10 10"><path d="M3 1l2 1 2-1 3 2-1.200 2.500L7.500 5v4.500h-5V5l-1.300.5L0 3z" fill="#1b6fb3"/></svg>
        <svg viewBox="0 0 10 10"><path d="M1 1.500h3.500v3H1zM5.500 1.500H9v3H5.500zM1 5.500h3.500v3H1zM5.500 5.500H9v3H5.500z" fill="#1b6fb3"/></svg>
      </div>
    </aside>
  </main>

  <footer class="status">
    <span class="hint">单击可进行选择; 按 Tab 键并单击可选择其他项目; 按 Ctrl 键并单击可将新项目添加到选择集; 按 Shift 键并单击可取消选择。</span>
    <span class="tray"><svg><use href="#s-ws"/></svg></span>
    <span class="selwrap"><select aria-label="工作集"><option></option></select><svg><use href="#chev"/></svg></span>
    <span class="tray mid"><svg><use href="#s-edit"/></svg>:0<svg class="gap"><use href="#s-opt"/></svg><svg><use href="#s-opt2"/></svg></span>
    <span class="selwrap"><select aria-label="设计选项"><option>主模型</option></select><svg><use href="#chev"/></svg></span>
    <span class="picks">
      <button aria-label="选择链接"><svg><use href="#s-link"/></svg></button>
      <button aria-label="选择基线图元"><svg><use href="#s-und"/></svg></button>
      <button aria-label="选择锁定图元"><svg><use href="#s-pin"/></svg></button>
      <button aria-label="按面选择图元"><svg><use href="#s-face"/></svg></button>
      <button aria-label="选择时拖曳图元"><svg><use href="#s-drag"/></svg></button>
      <button aria-label="后台进程"><svg><use href="#s-ring"/></svg></button>
      <button class="filter" aria-label="过滤器"><svg><use href="#s-filter"/></svg>:0</button>
    </span>
  </footer>
</div>
</body>
</html>
```
FILE: styles.css
```css
* { box-sizing: border-box; }

body {
  margin: 0;
  background: #fff;
  color: #222;
  font: 7px/11px "Open Sans", "Noto Sans CJK SC", sans-serif;
}

h1, h2, p, ul { margin: 0; padding: 0; font-size: 7px; font-weight: 400; }
ul { list-style: none; }
svg { display: block; flex: none; }
button, input, select { margin: 0; padding: 0; border: 0; background: none; color: inherit; font: inherit; border-radius: 0; }
button { display: flex; align-items: center; justify-content: center; white-space: nowrap; }

.sprite { position: absolute; width: 0; height: 0; }

.app {
  display: grid;
  grid-template-rows: auto auto auto auto 1fr auto;
  min-height: 100vh;
  padding-bottom: 24px;
}

.caret { width: 6px; height: 12px; display: flex; align-items: center; justify-content: center; }
.caret::before { content: ""; border: 2px solid transparent; border-top-color: #333; border-bottom: 0; }
.sep { width: 3px; }
.dn { width: 5px; height: 3px; }

/* title bar */
.titlebar { display: flex; height: 16px; padding-bottom: 3px; background: #cbcbcb; align-items: center; }
.qat { display: flex; align-items: center; }
.qat button { width: 14px; height: 13px; }
.qat svg, .account svg { width: 10px; height: 10px; }
.qat .rlogo b { width: 11px; height: 13px; background: #1559b0; color: #fff; font-size: 8px; line-height: 12px; border-radius: 1px; }
.qat .bigA { font-size: 11px; font-weight: 700; }
.qat .on { background: #bcdcf5; border: 1px solid #58a0d8; }
.titlebar h1 { flex: 1; text-align: center; color: #333; white-space: nowrap; line-height: 10px; padding-bottom: 2px; }
.account { display: flex; align-items: center; width: 205px; }
.account button { width: 12px; height: 12px; }
.account .login { width: 32px; gap: 3px; }
.account .push { margin-left: 30px; }
.account .help { margin-left: 8px; }
.wins { display: flex; gap: 2px; margin-left: auto; }

/* ribbon tabs */
.tabs { display: flex; height: 12px; background: #cbcbcb; color: #333; }
.tabs button { padding: 0 5px; margin-right: 1px; }
.tabs .file { width: 25px; margin-right: 2px; background: #2779b4; color: #fff; }
.tabs .active { padding: 0 4px; background: #f1f1f1; }
.tabs .more { margin-left: 10px; }
.tabs .more svg { width: 14px; height: 8px; }
.tabs .upload { position: relative; width: 58px; height: 13px; margin: 0 60px 0 auto; padding: 0; overflow: hidden; background: #aef0fa; border: 1px solid #56b4e4; border-radius: 2px; color: #4aa6cc; }
.upload svg { width: 14px; height: 12px; }
.upload span { flex: 1; }

/* ribbon */
.ribbon { display: flex; min-height: 54px; padding-top: 1px; background: #f0f0f0; border-bottom: 1px solid #d2d2d2; }
.panel { display: flex; flex-direction: column; padding-right: 1px; border-right: 1px solid #e2e2e2; }
.panel.last { border: 0; }
.panel.sel { padding: 0 2px 0 3px; }
.panel p { display: flex; align-items: center; justify-content: center; gap: 4px; margin-top: auto; }
.tools { display: flex; height: 41px; }
.tool { position: relative; flex-direction: column; justify-content: flex-start; padding-top: 2px; line-height: 10px; }
.tool svg { width: 18px; height: 18px; margin-bottom: 1px; }
.tool.active { background: #b5d9f5; border: 1px solid #6ba7d6; padding-top: 1px; }
.tool.off { color: #b5b5b5; }
.dd::after, .ds::after { content: ""; border: 1px solid transparent; border-top: 2px solid #444; border-bottom: 0; }
.dd::after { margin-top: 2px; }
.ds::after { position: absolute; right: 0; bottom: 9px; }
.w20 { width: 20px; }
.w22 { width: 22px; }
.w24 { width: 24px; }
.w26 { width: 26px; }
.w28 { width: 28px; }
.w40 { width: 40px; }

.brand { width: 165px; margin: 0 11px 0 auto; }
.brandrow { display: flex; gap: 8px; height: 38px; border-bottom: 2px solid #58a2c6; }
.brandrow svg { width: 30px; height: 35px; }
.brandrow strong { font: 700 30px/32px "Noto Sans CJK SC", sans-serif; color: #3b94bf; white-space: nowrap; }
.brand small { display: block; margin-top: 3px; font-size: 7px; font-weight: 700; white-space: nowrap; color: #111; }

.options { height: 15px; background: #f0f0f0; border-bottom: 2px solid #c9c9c9; }

/* work area */
.work { display: grid; grid-template-columns: 124px 1fr 184px; }
.phead { display: flex; align-items: center; height: 12px; padding: 0 2px; background: #f2f2f2; }
.phead h2 { flex: 1; }
.phead svg { width: 8px; height: 8px; }

.vscroll { display: flex; flex-direction: column; align-items: center; background: #f0f0f0; color: #555; }
.vscroll svg { width: 8px; height: 10px; }
.up { transform: rotate(180deg); }
.thumbbar { background: #cdcdcd; }

/* properties */
.props { display: flex; flex-direction: column; background: #f0f0f0; border-right: 1px solid #c4c4c4; }
.ptype { height: 41px; justify-content: flex-start; gap: 2px; padding-right: 3px; color: #333; }
.thumb { display: grid; place-items: center; width: 39px; height: 38px; background: #f7f7f7; border: 1px solid #e3e3e3; }
.thumb svg { width: 20px; height: 20px; }
.ptype .dn { margin-left: auto; }
.pfilter { display: flex; height: 14px; padding: 1px 2px 1px 0; gap: 2px; }
.pfilter button { flex: 1; gap: 2px; color: #111; }
.pfilter button svg { width: 10px; height: 10px; }
.selwrap { position: relative; display: flex; color: #999; }
.selwrap select { width: 100%; padding-left: 2px; appearance: none; color: #222; }
.selwrap svg { position: absolute; right: 1px; top: 2px; width: 8px; height: 8px; pointer-events: none; }
.pfilter .selwrap { width: 76px; background: #e3e3e3; border: 1px solid #d0d0d0; }

.pbody { flex: 1; display: grid; grid-template-columns: 1fr 10px; gap: 1px; background: #fff; }
.pbody table { display: block; }
.pbody tbody { display: grid; grid-auto-rows: minmax(11px, 1fr); height: 100%; }
.pbody tr { display: grid; grid-template-columns: 53px 53px 1fr; border-bottom: 1px dashed #d0d0d0; }
.pbody th, .pbody td { padding: 0; font-weight: 400; text-align: left; white-space: nowrap; line-height: 10px; border-right: 1px dashed #dcdcdc; }
.pbody th { padding-left: 6px; }
.pbody td { display: flex; align-items: center; padding-left: 2px; overflow: hidden; }
.pbody td:last-child { padding: 0; }
.pbody .ro { color: #999; }
.pbody .grp { grid-template-columns: 1fr; background: #dcdcdc; border-color: #dcdcdc; }
.grp th { display: flex; align-items: center; justify-content: space-between; padding: 0 1px 0 2px; border: 0; }
.grp svg { width: 8px; height: 8px; }
.pbody td button { flex: 1; height: 10px; margin: 0 1px 0 -1px; background: #e3e3e3; border: 1px solid #bdbdbd; line-height: 8px; }
.pbody input[type="text"] { width: 100%; height: 10px; margin-left: -1px; padding-left: 3px; border: 1px solid #333; background: #fff; }
.pbody input[type="checkbox"] { width: 8px; height: 8px; appearance: none; border: 1px solid #555; background: #fff; }
.pbody .thumbbar { width: 8px; flex: 1; margin-bottom: 56px; }
.pfoot { display: flex; align-items: center; justify-content: space-between; height: 14px; padding: 0 2px; }
.pfoot a { color: #1b6fb3; }
.pfoot button { width: 41px; height: 11px; background: #cbcbcb; color: #999; }

/* drawing view */
.doc { display: flex; flex-direction: column; min-width: 0; }
.doctabs { display: flex; align-items: center; height: 12px; padding-right: 2px; background: #c9c9c9; }
.doctab { display: flex; align-items: center; width: 73px; height: 12px; padding: 0 2px 0 3px; gap: 4px; background: #fff; }
.doctab svg { width: 8px; height: 8px; }
.doctab .ic { width: 9px; height: 9px; }
.doctab button { margin-left: auto; }
.tablist { width: 7px; height: 7px; margin-left: auto; }
.view { flex: 1; display: grid; grid-template-columns: 1fr 10px; }
.canvas { position: relative; overflow: hidden; background: #fff; }
.drawing { width: 100%; }
.view .vscroll { justify-content: space-between; }
.small { width: 8px; height: 10px; }
.navbar { position: absolute; top: 1px; right: 1px; display: flex; flex-direction: column; align-items: center; width: 20px; height: 66px; padding: 1px 0; justify-content: space-between; background: #f5f5f5; border: 1px solid #bbb; border-radius: 3px; }
.navbar svg { width: 16px; height: 16px; }
.navbar i:not(.caret) { align-self: flex-end; width: 4px; height: 4px; margin-right: 1px; border: 1px solid #aaa; border-radius: 50%; }
.navbar .caret { height: 4px; opacity: .5; }
.viewbar { display: flex; align-items: center; height: 12px; background: #f8f8f8; }
.ratio { width: 44px; padding-left: 13px; }
.viewbar button { width: 12px; height: 12px; }
.viewbar button svg { width: 10px; height: 9px; }
.hscroll { flex: 1; display: flex; align-items: center; justify-content: space-between; height: 11px; background: #f0f0f0; color: #444; }
.hscroll svg { width: 8px; height: 8px; }
.hscroll .thumbbar { width: 10px; height: 9px; }
.left { transform: rotate(90deg); }
.right { transform: rotate(-90deg); }
.grip { width: 9px; height: 10px; }

/* project browser */
.browser { position: relative; border-left: 1px solid #c4c4c4; background: #fff; }
.tree { padding: 0 0 0 3px; }
.tree li:nth-child(3n) { margin-top: 1px; }
.tree div { display: flex; align-items: center; gap: 3px; height: 11px; white-space: nowrap; }
.tree ul { margin-left: 6px; padding-left: 5px; background: repeating-linear-gradient(#bbb 0 1px, #fff 1px 3px) 7px 0 / 1px 100% no-repeat; }
.tree ul div { gap: 6px; }
.tree ul ul { margin-left: 16px; padding-left: 6px; background-position: 0 0; }
.tree ul ul div { gap: 3px; }
.tree svg { width: 9px; height: 9px; }
.tree b { padding: 0 2px; margin: 0 -2px; background: #e4e4e4; font-weight: 700; }
.ex { position: relative; width: 5px; height: 5px; margin-right: 2px; border: 1px solid #aaa; background: #fff; }
.ex::before { content: ""; position: absolute; left: 1px; top: 1px; width: 1px; height: 1px; background: #333; }
.ex.plus { background: #d4d4d4; }
.ex.none { border-color: transparent; background: none; }
.ex.none::before { display: none; }

.ime { position: absolute; top: 341px; right: 5px; display: flex; align-items: center; gap: 4px; height: 15px; padding: 0 1px 0 19px; background: #fff; border: 1px solid #e2e6ea; box-shadow: 0 0 2px #d6dce2; }
.ime svg { width: 10px; height: 10px; }
.ime b { width: 9px; font-size: 9px; line-height: 13px; color: #1b6fb3; }
.ime .sogou { position: absolute; left: -1px; top: -3px; width: 18px; height: 18px; }

/* status bar */
.status { display: flex; align-items: stretch; height: 12px; background: #c9c9c9; border-top: 1px solid #b5b5b5; white-space: nowrap; }
.hint { width: 528px; flex: none; color: #111; font-family: Roboto, "Noto Sans CJK SC", sans-serif; }
.status svg { width: 9px; height: 9px; }
.tray { display: flex; align-items: center; justify-content: center; width: 17px; background: #d8d8d8; }
.tray.mid { width: 63px; gap: 3px; }
.tray .gap { margin-left: 8px; }
.status .selwrap { width: 115px; background: #fff; }
.status select { color: #666; }
.status .selwrap svg { width: 8px; height: 8px; }
.picks { display: flex; align-items: center; gap: 5px; margin-left: auto; padding-right: 40px; }
.picks .filter { gap: 0; }
```
